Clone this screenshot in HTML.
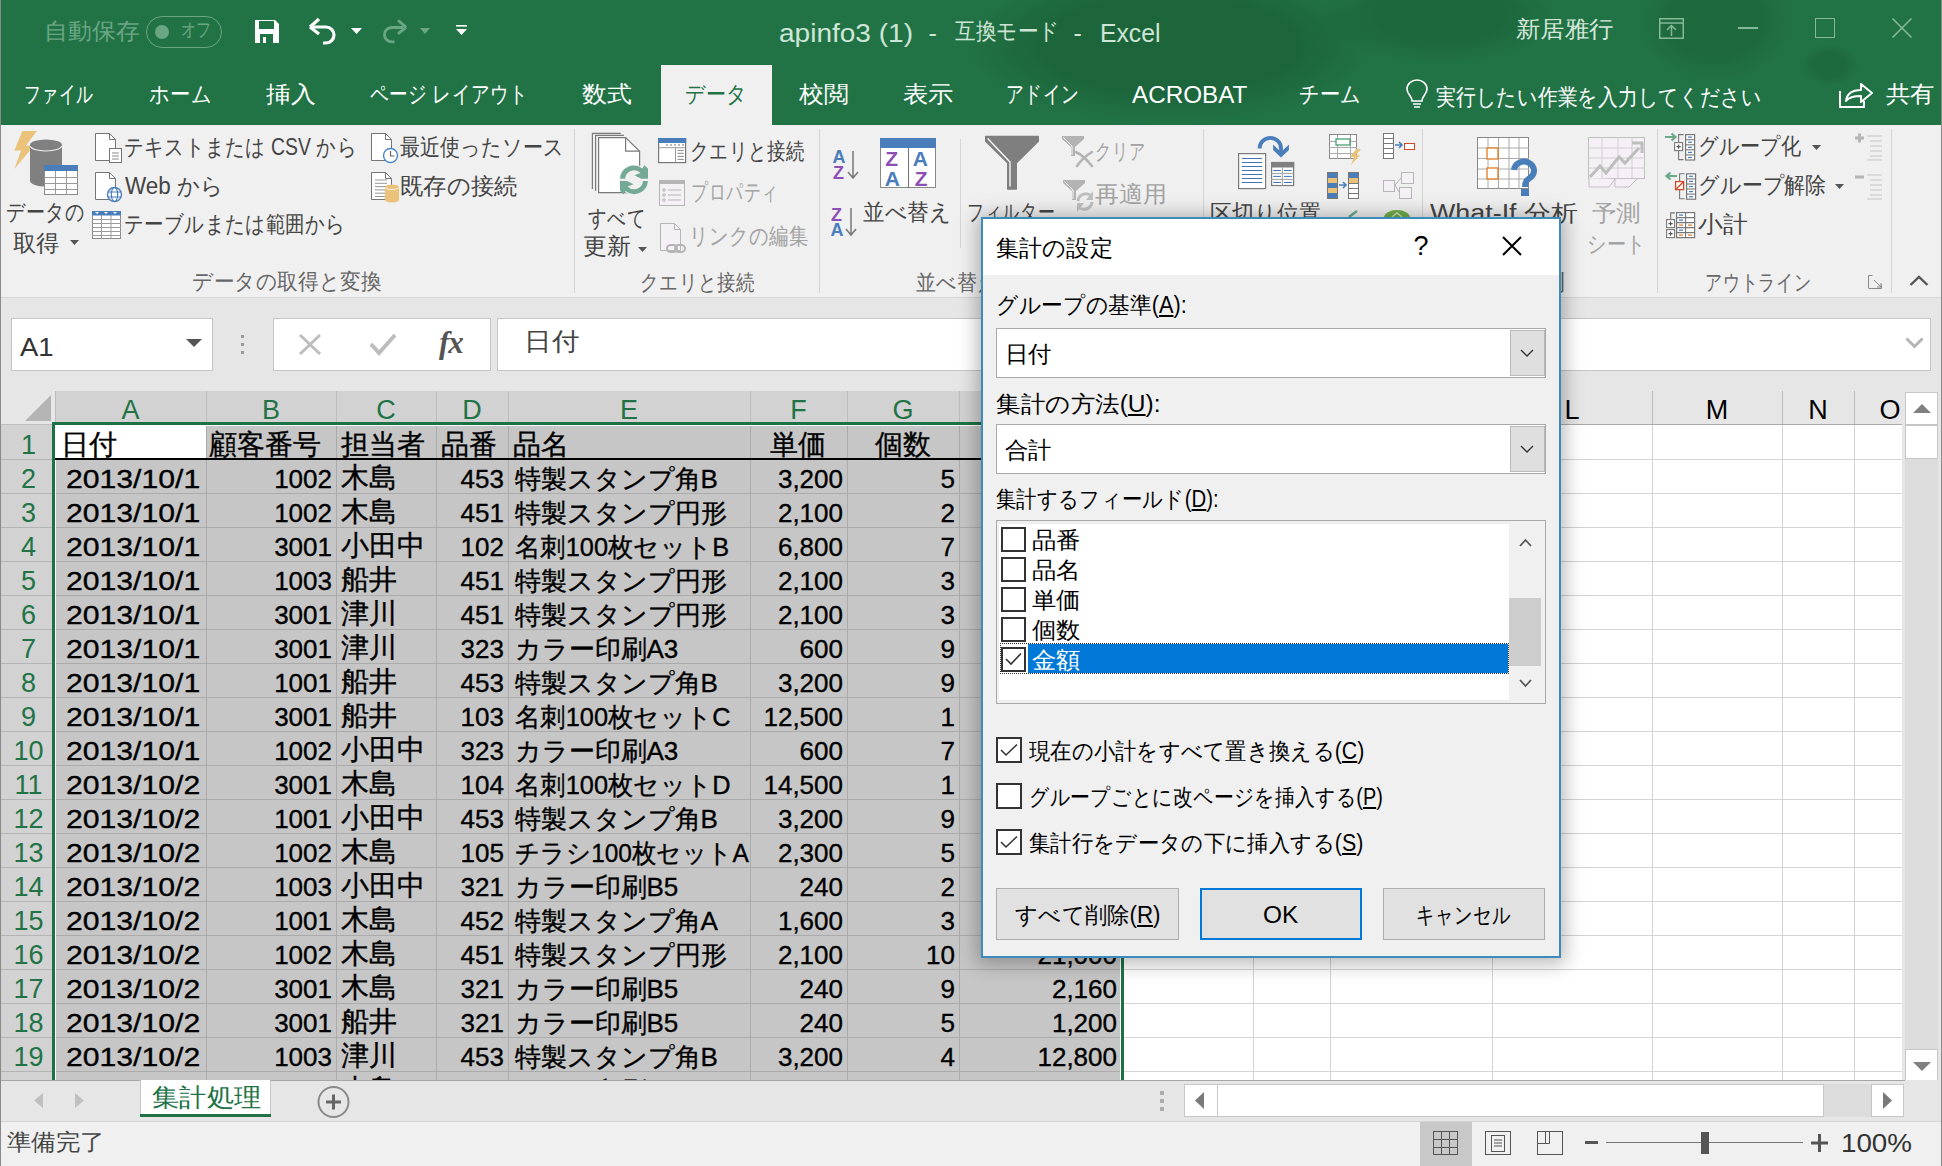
<!DOCTYPE html><html><head><meta charset="utf-8"><style>
html,body{margin:0;padding:0;}
body{width:1942px;height:1166px;position:relative;overflow:hidden;background:#f0f0f0;font-family:"Liberation Sans",sans-serif;}
.t{position:absolute;white-space:nowrap;line-height:1;transform-origin:0 0;}
.r{position:absolute;box-sizing:border-box;}
svg{position:absolute;overflow:visible;}
</style></head><body>
<div class="r" style="left:0px;top:0px;width:1942px;height:125px;background:#217346;"></div>
<div class="r" style="left:940px;top:0;width:1000px;height:125px;background:radial-gradient(ellipse 210px 80px at 230px 45px,rgba(25,90,50,.55) 60%,rgba(25,90,50,0) 100%),radial-gradient(ellipse 120px 50px at 500px 15px,rgba(25,90,50,.45) 55%,rgba(25,90,50,0) 100%),radial-gradient(ellipse 80px 65px at 775px 20px,rgba(25,90,50,.4) 55%,rgba(25,90,50,0) 100%),radial-gradient(ellipse 30px 22px at 890px 65px,rgba(25,90,50,.35) 55%,rgba(25,90,50,0) 100%);"></div>
<div id="t1" class="t" style="left:43.6px;top:19.9px;font-size:23px;color:#6aa683;transform:scaleX(1.0409);">自動保存</div>
<div class="r" style="left:146px;top:16px;width:76px;height:32px;border:1.5px solid #6aa683;border-radius:16px;"></div>
<div class="r" style="left:155px;top:25px;width:14px;height:14px;border-radius:50%;background:#6aa683;"></div>
<div id="t2" class="t" style="left:180.9px;top:20.3px;font-size:19px;color:#6aa683;transform:scaleX(0.7968);">オフ</div>
<svg style="left:254px;top:19px" width="26" height="25" viewBox="0 0 26 25"><path d="M1 1h20l4 4v19H1z" fill="#fff"/><rect x="5" y="2" width="15" height="8" fill="#217346"/><rect x="6" y="15" width="13" height="9" fill="#217346"/><rect x="9" y="18" width="3" height="6" fill="#fff"/></svg>
<svg style="left:309px;top:18px" width="30" height="27" viewBox="0 0 30 27"><path d="M4 9 H17 A8 8 0 0 1 17 25 H14" fill="none" stroke="#fff" stroke-width="3.2"/><path d="M1 9 L10 1 M1 9 L10 16" stroke="#fff" stroke-width="3.2" fill="none"/></svg>
<svg style="left:351px;top:28px" width="11" height="6"><path d="M0 0h11L5.5 6z" fill="#fff"/></svg>
<svg style="left:380px;top:18px" width="27" height="27" viewBox="0 0 30 27"><path d="M26 9 H13 A8 8 0 0 0 13 25 H16" fill="none" stroke="#6aa683" stroke-width="3.2"/><path d="M29 9 L20 1 M29 9 L20 16" stroke="#6aa683" stroke-width="3.2" fill="none"/></svg>
<svg style="left:420px;top:28px" width="10" height="6"><path d="M0 0h10L5 6z" fill="#6aa683"/></svg>
<svg style="left:456px;top:25px" width="11" height="11"><rect x="0" y="0" width="11" height="1.6" fill="#fff"/><path d="M0 4h11L5.5 10z" fill="#fff"/></svg>
<div id="t3" class="t" style="left:778.5px;top:20.6px;font-size:25px;color:#cfe5d6;transform:scaleX(1.1210);">apinfo3 (1)</div>
<div id="t4" class="t" style="left:928.5px;top:20.6px;font-size:25px;color:#cfe5d6;">-</div>
<div id="t5" class="t" style="left:954.6px;top:19.9px;font-size:23px;color:#cfe5d6;transform:scaleX(0.8954);">互換モード</div>
<div id="t6" class="t" style="left:1073.5px;top:20.6px;font-size:25px;color:#cfe5d6;">-</div>
<div id="t7" class="t" style="left:1100.1px;top:20.6px;font-size:25px;color:#cfe5d6;transform:scaleX(0.9879);">Excel</div>
<div id="t8" class="t" style="left:1515.6px;top:17.9px;font-size:23px;color:#d3e6d9;transform:scaleX(1.0626);">新居雅行</div>
<svg style="left:1659px;top:18px" width="25" height="21"><rect x="0.75" y="0.75" width="23.5" height="19.5" fill="none" stroke="#86b99a" stroke-width="1.5"/><path d="M1 5h23" stroke="#86b99a" stroke-width="1.5"/><path d="M12.5 18V8 M8 12l4.5-4.5L17 12" stroke="#86b99a" stroke-width="1.5" fill="none"/></svg>
<div class="r" style="left:1738px;top:27px;width:20px;height:2px;background:#86b99a;"></div>
<div class="r" style="left:1815px;top:18px;width:20px;height:20px;border:1.5px solid #86b99a;"></div>
<svg style="left:1892px;top:18px" width="20" height="20"><path d="M0.5 0.5L19.5 19.5M19.5 0.5L0.5 19.5" stroke="#86b99a" stroke-width="1.6"/></svg>
<div class="r" style="left:661px;top:65px;width:111px;height:60px;background:#f0f0f0;"></div>
<div id="t9" class="t" style="left:24.1px;top:82.9px;font-size:23px;color:#fff;transform:scaleX(0.7288);">ファイル</div>
<div id="t10" class="t" style="left:148.6px;top:82.9px;font-size:23px;color:#fff;transform:scaleX(0.8839);">ホーム</div>
<div id="t11" class="t" style="left:265.6px;top:82.9px;font-size:23px;color:#fff;transform:scaleX(1.0817);">挿入</div>
<div id="t12" class="t" style="left:369.6px;top:82.9px;font-size:23px;color:#fff;transform:scaleX(0.8043);">ページ レイアウト</div>
<div id="t13" class="t" style="left:581.6px;top:82.9px;font-size:23px;color:#fff;transform:scaleX(1.0817);">数式</div>
<div id="t14" class="t" style="left:684.6px;top:82.9px;font-size:23px;color:#217346;transform:scaleX(0.8699);">データ</div>
<div id="t15" class="t" style="left:798.6px;top:82.9px;font-size:23px;color:#fff;transform:scaleX(1.0817);">校閲</div>
<div id="t16" class="t" style="left:902.6px;top:82.9px;font-size:23px;color:#fff;transform:scaleX(1.1035);">表示</div>
<div id="t17" class="t" style="left:1005.6px;top:82.9px;font-size:23px;color:#fff;transform:scaleX(0.7683);">アドイン</div>
<div id="t18" class="t" style="left:1131.6px;top:84.3px;font-size:23px;color:#fff;transform:scaleX(1.0537);">ACROBAT</div>
<div id="t19" class="t" style="left:1299.2px;top:82.9px;font-size:23px;color:#fff;transform:scaleX(0.8825);">チーム</div>
<svg style="left:1405px;top:80px" width="24" height="28" viewBox="0 0 24 28"><path d="M7 21 C7 16 2 14 2 9 A10 9 0 0 1 22 9 C22 14 17 16 17 21 Z" fill="none" stroke="#fff" stroke-width="1.6"/><path d="M8 24h8M9 27h6" stroke="#fff" stroke-width="1.6"/></svg>
<div id="t20" class="t" style="left:1435.6px;top:85.9px;font-size:23px;color:#fff;transform:scaleX(0.8618);">実行したい作業を入力してください</div>
<svg style="left:1839px;top:82px" width="34" height="26" viewBox="0 0 34 26"><path d="M1 9v16h24v-6" fill="none" stroke="#fff" stroke-width="2"/><path d="M7 19 C8 11 14 8 22 8 V2 L33 11 L22 20 V14 C15 14 10 15 7 19Z" fill="none" stroke="#fff" stroke-width="2" stroke-linejoin="round"/></svg>
<div id="t21" class="t" style="left:1885.6px;top:82.9px;font-size:23px;color:#fff;transform:scaleX(1.0600);">共有</div>
<div class="r" style="left:0px;top:0px;width:1px;height:1166px;background:#8a8a8a;"></div>
<div class="r" style="left:1941px;top:0px;width:1px;height:1166px;background:#8a8a8a;"></div>
<div class="r" style="left:1px;top:125px;width:1940px;height:172px;background:#f0f0f0;"></div>
<div class="r" style="left:1px;top:297px;width:1940px;height:1px;background:#d6d6d6;"></div>
<div class="r" style="left:574px;top:129px;width:1px;height:164px;background:#d5d5d5;"></div>
<div class="r" style="left:819px;top:129px;width:1px;height:164px;background:#d5d5d5;"></div>
<div class="r" style="left:1203px;top:129px;width:1px;height:164px;background:#d5d5d5;"></div>
<div class="r" style="left:1422px;top:129px;width:1px;height:164px;background:#d5d5d5;"></div>
<div class="r" style="left:1657px;top:129px;width:1px;height:164px;background:#d5d5d5;"></div>
<div class="r" style="left:1891px;top:129px;width:1px;height:164px;background:#d5d5d5;"></div>
<div class="r" style="left:960px;top:139px;width:1px;height:109px;background:#d5d5d5;"></div>
<svg style="left:13px;top:130px" width="68" height="66" viewBox="0 0 68 66">
<path d="M9.4 1h14.4l-11 14.8h8.1L1.3 39l6.9-18.5H1.3z" fill="#ebc27a"/>
<path d="M17 15 a16 5.5 0 0 1 32 0 v36 a16 5.5 0 0 1 -32 0z" fill="#808080"/>
<path d="M17.5 16 a15.5 5 0 0 0 31 0" fill="none" stroke="#f0f0f0" stroke-width="1.2"/>
<rect x="31.5" y="35.5" width="33" height="29" fill="#fff" stroke="#8a8a8a"/>
<rect x="31" y="35" width="34" height="6" fill="#4a7ebb"/>
<path d="M42.5 41v24M53.5 41v24M31 47.5h34M31 53.5h34M31 59.5h34" stroke="#9a9a9a" stroke-width="1"/>
</svg>
<div id="t22" class="t" style="left:5.6px;top:201.4px;font-size:23px;color:#444444;transform:scaleX(0.8291);">データの</div>
<div id="t23" class="t" style="left:12.6px;top:232.4px;font-size:23px;color:#444444;transform:scaleX(1.0165);">取得</div>
<svg style="left:70px;top:240px" width="9" height="5" viewBox="0 0 9 5"><path d="M0 0h9L4.5 5z" fill="#555"/></svg>
<svg style="left:95px;top:133px" width="23" height="30" viewBox="0 0 23 30"><path d="M0.5 0.5h14l6 6v21h-20z" fill="#fff" stroke="#757575"/><path d="M14.5 0.5v6h6" fill="none" stroke="#757575"/></svg>
<svg style="left:108px;top:147px" width="15" height="17" viewBox="0 0 15 17"><rect x="1.5" y="1.5" width="12" height="14" fill="#fff" stroke="#757575"/><path d="M4 6h7M4 9h7M4 12h7" stroke="#8a8a8a"/></svg>
<div id="t24" class="t" style="left:123.6px;top:136.4px;font-size:23px;color:#444444;transform:scaleX(0.8431);">テキストまたは CSV から</div>
<svg style="left:95px;top:172px" width="23" height="30" viewBox="0 0 23 30"><path d="M0.5 0.5h14l6 6v21h-20z" fill="#fff" stroke="#757575"/><path d="M14.5 0.5v6h6" fill="none" stroke="#757575"/></svg>
<svg style="left:106px;top:186px" width="17" height="17" viewBox="0 0 17 17"><circle cx="8.5" cy="8.5" r="7" fill="#fff" stroke="#4a7ebb" stroke-width="1.4"/><ellipse cx="8.5" cy="8.5" rx="3.2" ry="7" fill="none" stroke="#4a7ebb" stroke-width="1.2"/><path d="M1.5 6h14M1.5 11h14" stroke="#4a7ebb" stroke-width="1.2"/></svg>
<div id="t25" class="t" style="left:124.6px;top:175.4px;font-size:23px;color:#444444;transform:scaleX(0.9751);">Web から</div>
<svg style="left:92px;top:211px" width="29" height="29" viewBox="0 0 29 29"><rect x="0.5" y="0.5" width="28" height="27" fill="#fff" stroke="#8a8a8a"/><rect x="0" y="0" width="29" height="4.5" fill="#4a7ebb"/><path d="M9.5 4v24M19 4v24M0 8.5h29M0 12.5h29M0 16.5h29M0 20.5h29M0 24.5h29" stroke="#9a9a9a" stroke-width="1"/><path d="M3 1h4l-2 2zM12 1h4l-2 2zM21 1h4l-2 2z" fill="#fff"/></svg>
<div id="t26" class="t" style="left:123.6px;top:213.4px;font-size:23px;color:#444444;transform:scaleX(0.8477);">テーブルまたは範囲から</div>
<svg style="left:371px;top:133px" width="23" height="30" viewBox="0 0 23 30"><path d="M0.5 0.5h14l6 6v21h-20z" fill="#fff" stroke="#757575"/><path d="M14.5 0.5v6h6" fill="none" stroke="#757575"/></svg>
<svg style="left:382px;top:147px" width="17" height="17" viewBox="0 0 17 17"><circle cx="8.5" cy="8.5" r="7" fill="#fff" stroke="#4a86c8" stroke-width="1.4"/><path d="M8.5 4v5h4" fill="none" stroke="#666" stroke-width="1.2"/></svg>
<div id="t27" class="t" style="left:400.2px;top:136.4px;font-size:23px;color:#444444;transform:scaleX(0.8732);">最近使ったソース</div>
<svg style="left:371px;top:172px" width="23" height="30" viewBox="0 0 23 30"><path d="M0.5 0.5h14l6 6v21h-20z" fill="#fff" stroke="#757575"/><path d="M14.5 0.5v6h6" fill="none" stroke="#757575"/><path d="M4 8.0h12" stroke="#8a8a8a" stroke-width="0.9"/><path d="M4 11.3h12" stroke="#8a8a8a" stroke-width="0.9"/><path d="M4 14.6h12" stroke="#8a8a8a" stroke-width="0.9"/><path d="M4 17.9h12" stroke="#8a8a8a" stroke-width="0.9"/><path d="M4 21.2h12" stroke="#8a8a8a" stroke-width="0.9"/><path d="M4 24.5h12" stroke="#8a8a8a" stroke-width="0.9"/></svg>
<svg style="left:385px;top:184px" width="14" height="19" viewBox="0 0 14 19"><path d="M0 3a7 2.5 0 0 1 14 0v13a7 2.5 0 0 1-14 0z" fill="#ebc27a"/><path d="M0.5 3.5a6.5 2 0 0 0 13 0" fill="none" stroke="#fff" stroke-width="0.8"/></svg>
<div id="t28" class="t" style="left:400.2px;top:175.4px;font-size:23px;color:#444444;transform:scaleX(1.0143);">既存の接続</div>
<div id="t29" class="t" style="left:191.7px;top:270.5px;font-size:22px;color:#666666;transform:scaleX(0.9388);">データの取得と変換</div>
<svg style="left:580px;top:128px" width="72" height="70" viewBox="0 0 72 70"><path d="M12.4 61V5.4H40.8" fill="none" stroke="#7a7a7a" stroke-width="1.2"/>
<path d="M15.6 62.7V7.4H43.9" fill="none" stroke="#7a7a7a" stroke-width="1.2"/>
<path d="M18.6 64.6V9.6H45.6L59.6 23.2V64.6Z" fill="#fff" stroke="#7a7a7a" stroke-width="1.2"/>
<path d="M45.6 9.6V23.2H59.6" fill="none" stroke="#7a7a7a" stroke-width="1.2"/>
<circle cx="54" cy="51.8" r="15" fill="#f0f0f0"/><g fill="#73a995"><path d="M40.1 50.7A13.9 13.9 0 0 1 62.5 40.5L64.3 37.1L68 40.8V50.7H61.2L54.4 47.3L60.4 45.1A9 9 0 0 0 45 50.7Z"/>
<path d="M40.1 50.7A13.9 13.9 0 0 1 62.5 40.5L64.3 37.1L68 40.8V50.7H61.2L54.4 47.3L60.4 45.1A9 9 0 0 0 45 50.7Z" transform="rotate(180 54 51.8)"/></g></svg>
<div id="t30" class="t" style="left:587.6px;top:206.9px;font-size:23px;color:#444444;transform:scaleX(0.8022);">すべて</div>
<div id="t31" class="t" style="left:582.6px;top:235.4px;font-size:23px;color:#444444;transform:scaleX(1.0383);">更新</div>
<svg style="left:638px;top:247px" width="9" height="5" viewBox="0 0 9 5"><path d="M0 0h9L4.5 5z" fill="#555"/></svg>
<svg style="left:658px;top:138px" width="29" height="26" viewBox="0 0 29 26"><rect x="0.6" y="0.6" width="27" height="24" fill="#fff" stroke="#777" stroke-width="1.2"/><rect x="0" y="0" width="28.2" height="5" fill="#4a7ebb"/><path d="M8.2 7h1.6M12.2 7h1.6M16.2 7h1.6M20.2 7h1.6M24.2 7h1.6" stroke="#8a8a8a" stroke-width="1.6"/><path d="M0.5 9.7h27M17.5 9.7v15" stroke="#999"/><path d="M19.5 12.4h6.3M19.5 15.3h6.3M19.5 18.4h6.3M19.5 21.4h6.3" stroke="#888"/></svg>
<div id="t32" class="t" style="left:689.6px;top:140.4px;font-size:23px;color:#444444;transform:scaleX(0.8046);">クエリと接続</div>
<svg style="left:659px;top:180px" width="27" height="27" viewBox="0 0 27 27"><rect x="0.5" y="0.5" width="25" height="25" fill="#f5f0f5" stroke="#b5b5b5"/><rect x="0" y="0" width="26" height="4" fill="#b5b5b5"/><path d="M9 10h13M9 15h13M9 20h13" stroke="#b5b5b5"/><circle cx="5" cy="10" r="1.3" fill="none" stroke="#b5b5b5"/><circle cx="5" cy="15" r="1.3" fill="none" stroke="#b5b5b5"/><circle cx="5" cy="20" r="1.3" fill="none" stroke="#b5b5b5"/></svg>
<div id="t33" class="t" style="left:690.6px;top:181.4px;font-size:23px;color:#a3a3a3;transform:scaleX(0.7313);">プロパティ</div>
<svg style="left:660px;top:223px" width="29" height="32" viewBox="0 0 29 32"><path d="M0.5 0.5h14l6 6v21h-20z" fill="#f5f0f5" stroke="#b5b5b5"/><path d="M14.5 0.5v6h6" fill="none" stroke="#b5b5b5"/><rect x="7" y="22" width="10" height="7" rx="3.5" fill="none" stroke="#b5b5b5" stroke-width="2"/><rect x="15" y="22" width="10" height="7" rx="3.5" fill="none" stroke="#b5b5b5" stroke-width="2"/></svg>
<div id="t34" class="t" style="left:689.3px;top:225.4px;font-size:23px;color:#a3a3a3;transform:scaleX(0.8385);">リンクの編集</div>
<div id="t35" class="t" style="left:639.7px;top:271.5px;font-size:22px;color:#666666;transform:scaleX(0.8407);">クエリと接続</div>
<div id="t36" class="t" style="left:832.4px;top:148.4px;font-size:18px;color:#4a7ebb;font-weight:bold">A</div>
<div id="t37" class="t" style="left:832.9px;top:164.4px;font-size:18px;color:#8e4fb5;font-weight:bold">Z</div>
<svg style="left:847px;top:151px" width="12" height="30" viewBox="0 0 12 30"><path d="M6 0v27M1 21l5 6 5-6" fill="none" stroke="#777" stroke-width="1.5"/></svg>
<div id="t38" class="t" style="left:830.9px;top:205.9px;font-size:18px;color:#8e4fb5;font-weight:bold">Z</div>
<div id="t39" class="t" style="left:830.4px;top:220.9px;font-size:18px;color:#4a7ebb;font-weight:bold">A</div>
<svg style="left:845px;top:208px" width="12" height="30" viewBox="0 0 12 30"><path d="M6 0v27M1 21l5 6 5-6" fill="none" stroke="#777" stroke-width="1.5"/></svg>
<svg style="left:880px;top:138px" width="56" height="50" viewBox="0 0 56 50"><rect x="0.5" y="0.5" width="55" height="49" fill="#fff" stroke="#888"/><rect x="0" y="0" width="56" height="10" fill="#4a7ebb"/><path d="M28.5 10v40" stroke="#777" stroke-width="1.1"/></svg>
<div id="t40" class="t" style="left:885.2px;top:147.5px;font-size:21px;color:#8e4fb5;font-weight:bold">Z</div>
<div id="t41" class="t" style="left:884.7px;top:167.5px;font-size:21px;color:#4a7ebb;font-weight:bold">A</div>
<div id="t42" class="t" style="left:912.7px;top:147.5px;font-size:21px;color:#4a7ebb;font-weight:bold">A</div>
<div id="t43" class="t" style="left:914.7px;top:167.5px;font-size:21px;color:#8e4fb5;font-weight:bold">Z</div>
<div id="t44" class="t" style="left:863.1px;top:201.4px;font-size:23px;color:#444444;transform:scaleX(0.9368);">並べ替え</div>
<div id="t45" class="t" style="left:916.3px;top:271.5px;font-size:22px;color:#666666;transform:scaleX(0.9033);">並べ替えとフィルター</div>
<svg style="left:984px;top:135px" width="57" height="57" viewBox="0 0 57 57"><path d="M1 0.7H55V6.5L33 28.2V54.7H23V28.2L1 6.5Z" fill="#7f7f7f"/><path d="M3.7 3.5L26 27V51.5" fill="none" stroke="#fff" stroke-width="1.3"/></svg>
<div id="t46" class="t" style="left:966.6px;top:201.4px;font-size:23px;color:#444444;transform:scaleX(0.7375);">フィルター</div>
<svg style="left:1061px;top:135px" width="34" height="34" viewBox="0 0 34 34"><path d="M1 1H23V4L14 12V21H10V12L1 4Z" fill="#b3b3b3"/><path d="M2.5 2.5L11 11V20" fill="none" stroke="#fff" stroke-width="0.9"/><path d="M15 17C21 20 27 26 31 31M16 31C20 25 26 20 31 17" fill="none" stroke="#b3b3b3" stroke-width="2.6" stroke-linecap="round"/></svg>
<div id="t47" class="t" style="left:1094.7px;top:141.0px;font-size:22px;color:#a3a3a3;transform:scaleX(0.7339);">クリア</div>
<svg style="left:1062px;top:179px" width="34" height="34" viewBox="0 0 34 34"><path d="M1 1H23V4L14 12V21H10V12L1 4Z" fill="#b3b3b3"/><path d="M2.5 2.5L11 11V20" fill="none" stroke="#fff" stroke-width="0.9"/><path d="M16 22A8 8 0 0 1 29.5 17" fill="none" stroke="#c0c0c0" stroke-width="3"/><path d="M31 12V21H24Z" fill="#c0c0c0"/><path d="M30 23A8 8 0 0 1 16.5 28" fill="none" stroke="#c0c0c0" stroke-width="3"/><path d="M15 33V24H22Z" fill="#c0c0c0"/></svg>
<div id="t48" class="t" style="left:1095.4px;top:183.4px;font-size:23px;color:#a3a3a3;transform:scaleX(1.0400);">再適用</div>
<svg style="left:1230px;top:128px" width="70" height="67" viewBox="0 0 70 67"><path d="M29.6 20.5A10.7 10.7 0 0 1 51 20.5V25" fill="none" stroke="#4a7ebb" stroke-width="3.8"/>
<path d="M43.1 16.4L51 24L58.9 16.4V22L51 29.5L43.1 22Z" fill="#4a7ebb"/>
<rect x="8.6" y="25.6" width="27" height="35" fill="#fff" stroke="#7a7a7a" stroke-width="1.2"/>
<path d="M12 30.5h20M12 34.5h20M12 38.5h20M12 42.5h20M12 46.5h20M12 50.5h20M12 54.5h20" stroke="#3f74b8" stroke-width="1"/>
<rect x="41.6" y="34.5" width="22" height="23" fill="#fff" stroke="#7a7a7a" stroke-width="1.2"/><rect x="41" y="34" width="23.2" height="5.5" fill="#808080"/>
<path d="M52.4 39.5v18M41 45.4h23M41 51.4h23" stroke="#a0a0a0"/>
<path d="M43.2 42.5h7.7M54 42.5h7.8M43.2 48.4h7.7M54 48.4h7.8M43.2 54.5h7.7M54 54.5h7.8" stroke="#3f74b8" stroke-width="1"/></svg>
<div id="t49" class="t" style="left:1209.6px;top:202.4px;font-size:23px;color:#444444;transform:scaleX(0.9591);">区切り位置</div>
<svg style="left:1328px;top:133px" width="33" height="33" viewBox="0 0 33 33"><rect x="1.5" y="1.5" width="27" height="24" fill="#fff" stroke="#888"/><path d="M9.5 2v24M22.5 2v24M1 8.5h28M1 14.5h28M1 20.5h28" stroke="#aaa"/><rect x="8" y="6" width="14" height="6" fill="#fff" stroke="#3a9a6a" stroke-width="1.2"/><path d="M28 16h5l-5 6h4l-9 10 3-8h-4z" fill="#ebc27a"/></svg>
<svg style="left:1326px;top:172px" width="35" height="28" viewBox="0 0 35 28"><rect x="1.5" y="0.5" width="10" height="26" fill="#4a7ebb" stroke="#777"/><rect x="2" y="6" width="9" height="5" fill="#ebc27a"/><rect x="2" y="16" width="9" height="5" fill="#ebc27a"/><rect x="22.5" y="0.5" width="10" height="26" fill="#fff" stroke="#777"/><rect x="23" y="1" width="9" height="5" fill="#4a7ebb"/><rect x="23" y="6" width="9" height="5" fill="#ebc27a"/><path d="M22 11.5h11M22 16.5h11M22 21.5h11" stroke="#777"/><path d="M13 13h7M17 10l3 3-3 3" fill="none" stroke="#4a7ebb" stroke-width="1.6"/></svg>
<svg style="left:1382px;top:133px" width="34" height="28" viewBox="0 0 34 28"><rect x="1.5" y="0.5" width="10" height="25" fill="#fff" stroke="#777"/><path d="M1 5.5h11M1 10.5h11M1 15.5h11M1 20.5h11" stroke="#777"/><path d="M13 12h7M17 9l3 3-3 3" fill="none" stroke="#4a7ebb" stroke-width="1.6"/><rect x="22.5" y="10.5" width="10" height="6" fill="#fff" stroke="#d24726"/></svg>
<svg style="left:1383px;top:172px" width="33" height="28" viewBox="0 0 33 28"><rect x="0.5" y="8.5" width="11" height="11" fill="#f5f0f5" stroke="#b5b5b5"/><rect x="18.5" y="0.5" width="12" height="11" fill="#f5f0f5" stroke="#b5b5b5"/><rect x="16.5" y="15.5" width="12" height="11" fill="#f5f0f5" stroke="#b5b5b5"/><path d="M12 13l6-7M12 13l4 7" stroke="#b5b5b5"/></svg>
<svg style="left:1476px;top:136px" width="62" height="60" viewBox="0 0 62 60"><rect x="1.5" y="1.5" width="51" height="51" fill="#fff" stroke="#888"/>
<path d="M12 2v51M22.5 2v51M33 2v51M43 2v51M2 12h51M2 22.5h51M2 33h51M2 43h51" stroke="#aaa"/>
<rect x="11" y="12" width="11" height="11" fill="#fff" stroke="#e07b24" stroke-width="1.3"/><rect x="11" y="32" width="11" height="11" fill="#fff" stroke="#e07b24" stroke-width="1.3"/>
<path d="M38 34a10 9 0 1 1 17 7c-4 3-6 4-6 10" fill="none" stroke="#4a7ebb" stroke-width="6"/><rect x="45" y="53" width="8" height="7" fill="#4a7ebb"/></svg>
<div id="t50" class="t" style="left:1429.6px;top:201.8px;font-size:23px;color:#444444;transform:scaleX(1.1679);">What-If 分析</div>
<svg style="left:1588px;top:137px" width="58" height="52" viewBox="0 0 58 52"><rect x="0.5" y="0.5" width="56" height="41" fill="#f5f0f5" stroke="#c0c0c0"/><path d="M14 1v40M30 1v40M44 1v40M1 11h56M1 21h56M1 31h56" stroke="#d0d0d0"/><path d="M1 41v9h20l6-8M27 42v8h14l8-8" fill="#f5f0f5" stroke="#c0c0c0"/><path d="M2 40l10-11 6 7 13-16 6 6 14-15" fill="none" stroke="#bdbdbd" stroke-width="3"/><path d="M44 6h10v10" fill="none" stroke="#bdbdbd" stroke-width="3"/></svg>
<div id="t51" class="t" style="left:1591.6px;top:202.4px;font-size:23px;color:#a3a3a3;transform:scaleX(1.0600);">予測</div>
<div id="t52" class="t" style="left:1586.6px;top:233.4px;font-size:23px;color:#a3a3a3;transform:scaleX(0.8346);">シート</div>
<div id="t53" class="t" style="left:1516.7px;top:271.5px;font-size:22px;color:#666666;transform:scaleX(1.0827);">予測</div>
<svg style="left:1655px;top:128px" width="45" height="36" viewBox="0 0 45 36"><path d="M10 9h10M16.5 5.5L20.5 9l-4 3.5" fill="none" stroke="#6aa88a" stroke-width="2.2"/><path d="M28.6 6.6h-5v25h5" fill="none" stroke="#777" stroke-width="1.1"/><rect x="19.6" y="14.6" width="8" height="8" fill="#fff" stroke="#777" stroke-width="1.1"/><path d="M21.5 18.6h4.2M23.6 16.5v4.2" stroke="#555" stroke-width="1.1"/><rect x="30.6" y="6.6" width="9" height="25.4" fill="#fff" stroke="#777" stroke-width="1.2"/><path d="M30 11.7h10" stroke="#777" stroke-width="1.1"/><path d="M30 16.8h10" stroke="#777" stroke-width="1.1"/><path d="M30 21.8h10" stroke="#777" stroke-width="1.1"/><path d="M30 26.9h10" stroke="#777" stroke-width="1.1"/><path d="M33 9.1h4" stroke="#4a7ebb" stroke-width="1.2"/><path d="M33 14.2h4" stroke="#4a7ebb" stroke-width="1.2"/><path d="M33 19.3h4" stroke="#4a7ebb" stroke-width="1.2"/><path d="M33 24.4h4" stroke="#4a7ebb" stroke-width="1.2"/><path d="M33 29.5h4" stroke="#4a7ebb" stroke-width="1.2"/></svg>
<div id="t54" class="t" style="left:1698.2px;top:135.4px;font-size:23px;color:#444444;transform:scaleX(0.8742);">グループ化</div>
<svg style="left:1812px;top:145px" width="9" height="5" viewBox="0 0 9 5"><path d="M0 0h9L4.5 5z" fill="#555"/></svg>
<svg style="left:1655px;top:128px" width="45" height="75" viewBox="0 0 45 75"><path d="M22 48H12M15.5 44.5L11.5 48l4 3.5" fill="none" stroke="#6aa88a" stroke-width="2.2"/><path d="M29.6 45.8h-5v25h5" fill="none" stroke="#777" stroke-width="1.1"/><rect x="20.6" y="53.6" width="8" height="8" fill="#fff" stroke="#d24726" stroke-width="1.3"/><path d="M21 61.3l7.3-7.3" stroke="#d24726" stroke-width="1.3"/><rect x="31.6" y="45.800000000000004" width="9" height="25.4" fill="#fff" stroke="#777" stroke-width="1.2"/><path d="M31 50.9h10" stroke="#777" stroke-width="1.1"/><path d="M31 56.0h10" stroke="#777" stroke-width="1.1"/><path d="M31 61.0h10" stroke="#777" stroke-width="1.1"/><path d="M31 66.1h10" stroke="#777" stroke-width="1.1"/><path d="M34 48.3h4" stroke="#4a7ebb" stroke-width="1.2"/><path d="M34 53.4h4" stroke="#4a7ebb" stroke-width="1.2"/><path d="M34 58.5h4" stroke="#4a7ebb" stroke-width="1.2"/><path d="M34 63.6h4" stroke="#4a7ebb" stroke-width="1.2"/><path d="M34 68.7h4" stroke="#4a7ebb" stroke-width="1.2"/></svg>
<div id="t55" class="t" style="left:1698.2px;top:174.4px;font-size:23px;color:#444444;transform:scaleX(0.9089);">グループ解除</div>
<svg style="left:1835px;top:184px" width="9" height="5" viewBox="0 0 9 5"><path d="M0 0h9L4.5 5z" fill="#555"/></svg>
<svg style="left:1655px;top:128px" width="45" height="112" viewBox="0 0 45 112"><path d="M20 84.9h-4.3v6.3" fill="none" stroke="#777" stroke-width="1.1"/><rect x="11.6" y="91.6" width="8" height="8" fill="#fff" stroke="#777" stroke-width="1.1"/><path d="M13.5 95.6h4.2M15.6 93.5v4.2" stroke="#555" stroke-width="1.1"/><rect x="11.6" y="101.6" width="8" height="8" fill="#fff" stroke="#777" stroke-width="1.1"/><path d="M13.5 105.6h4.2M15.6 103.5v4.2" stroke="#555" stroke-width="1.1"/><rect x="21.6" y="84.6" width="18" height="25" fill="#fff" stroke="#777" stroke-width="1.2"/><path d="M30.6 84.6v25M21 89.6h19M21 94.6h19M21 99.6h19M21 104.6h19" stroke="#777" stroke-width="1.1"/><path d="M24 87.1h4M24 92.1h4M24 102.1h4" stroke="#4a7ebb" stroke-width="1.2"/><path d="M24 97.1h4M33 97.1h4M24 107.1h4M33 107.1h4" stroke="#e07b24" stroke-width="1.2"/></svg>
<div id="t56" class="t" style="left:1698.2px;top:213.4px;font-size:23px;color:#444444;transform:scaleX(1.0817);">小計</div>
<svg style="left:1853px;top:133px" width="30" height="28" viewBox="0 0 30 28"><path d="M2 5h9M6.5 0.5v9" stroke="#b5b5b5" stroke-width="3"/><path d="M14 3h15M17 8h12M17 13h12M17 18h12M17 23h12M14 27h15" stroke="#c5c5c5"/></svg>
<svg style="left:1853px;top:172px" width="30" height="28" viewBox="0 0 30 28"><path d="M2 5h9" stroke="#b5b5b5" stroke-width="3"/><path d="M14 3h15M17 8h12M17 13h12M17 18h12M17 23h12M14 27h15" stroke="#c5c5c5"/></svg>
<div id="t57" class="t" style="left:1704.7px;top:271.5px;font-size:22px;color:#666666;transform:scaleX(0.7728);">アウトライン</div>
<svg style="left:1868px;top:275px" width="15" height="14" viewBox="0 0 15 14"><path d="M0.5 13V0.5h4M0.5 13.5h13v-4" fill="none" stroke="#888"/><path d="M6 5l7 7M13 8v4h-4" fill="none" stroke="#888"/></svg>
<svg style="left:1909px;top:275px" width="20" height="11" viewBox="0 0 20 11"><path d="M1.5 10l8.5-8 8.5 8" fill="none" stroke="#555" stroke-width="2.4"/></svg>
<svg style="left:1384px;top:209px" width="28" height="10" viewBox="0 0 28 10"><ellipse cx="13" cy="9" rx="13" ry="8" fill="#70ad47"/><path d="M8 8l5-4 5 4" fill="none" stroke="#cfe8c0" stroke-width="1.4"/></svg>
<svg style="left:1348px;top:210px" width="10" height="8" viewBox="0 0 10 8"><path d="M1 7L9 1" stroke="#6aab8e" stroke-width="2.5"/></svg>
<div class="r" style="left:1px;top:298px;width:1940px;height:94px;background:#e6e6e6;"></div>
<div class="r" style="left:11px;top:318px;width:202px;height:53px;background:#fff;border:1px solid #c6c6c6;"></div>
<div id="t58" class="t" style="left:19.5px;top:335.1px;font-size:25px;color:#333;transform:scaleX(1.0950);">A1</div>
<svg style="left:186px;top:339px" width="16" height="8" viewBox="0 0 16 8"><path d="M0 0h16L8 8z" fill="#555"/></svg>
<div class="r" style="left:241px;top:335px;width:3px;height:3px;background:#9a9a9a;"></div>
<div class="r" style="left:241px;top:343px;width:3px;height:3px;background:#9a9a9a;"></div>
<div class="r" style="left:241px;top:351px;width:3px;height:3px;background:#9a9a9a;"></div>
<div class="r" style="left:273px;top:318px;width:218px;height:53px;background:#fff;border:1px solid #c6c6c6;"></div>
<svg style="left:298px;top:334px" width="25" height="21" viewBox="0 0 25 21"><path d="M2 1l20 19M22 1L2 20" stroke="#bdbdbd" stroke-width="3"/></svg>
<svg style="left:369px;top:333px" width="28" height="22" viewBox="0 0 28 22"><path d="M2 11l8 9L26 2" fill="none" stroke="#bdbdbd" stroke-width="4"/></svg>
<div class="t" style="left:439px;top:327px;font-size:31px;color:#555;font-family:'Liberation Serif',serif;font-style:italic;font-weight:bold;letter-spacing:-1px">fx</div>
<div class="r" style="left:497px;top:318px;width:1434px;height:53px;background:#fff;border:1px solid #c6c6c6;"></div>
<div id="t59" class="t" style="left:523.5px;top:329.2px;font-size:25px;color:#444;transform:scaleX(1.1000);">日付</div>
<svg style="left:1905px;top:337px" width="19" height="12" viewBox="0 0 19 12"><path d="M1.5 1.5l8 8 8-8" fill="none" stroke="#b5b5b5" stroke-width="3"/></svg>
<div class="r" style="left:1px;top:391px;width:1904px;height:690px;background:#fff;"></div>
<div class="r" style="left:1px;top:391px;width:54px;height:34px;background:#e6e6e6;"></div>
<svg style="left:25px;top:395px" width="27" height="26" viewBox="0 0 27 26"><path d="M26 0v26H0z" fill="#b4b4b4"/></svg>
<div class="r" style="left:1px;top:424px;width:51px;height:1px;background:#bdbdbd;"></div>
<div class="r" style="left:55px;top:391px;width:151px;height:34px;background:#d2d2d2;"></div>
<div class="r" style="left:55px;top:391px;width:1px;height:33px;background:#bdbdbd;"></div>
<div class="t" style="left:90.5px;top:396.5px;width:80px;text-align:center;font-size:27px;color:#217346">A</div>
<div class="r" style="left:206px;top:391px;width:130px;height:34px;background:#d2d2d2;"></div>
<div class="r" style="left:206px;top:391px;width:1px;height:33px;background:#bdbdbd;"></div>
<div class="t" style="left:231.0px;top:396.5px;width:80px;text-align:center;font-size:27px;color:#217346">B</div>
<div class="r" style="left:336px;top:391px;width:100px;height:34px;background:#d2d2d2;"></div>
<div class="r" style="left:336px;top:391px;width:1px;height:33px;background:#bdbdbd;"></div>
<div class="t" style="left:346.0px;top:396.5px;width:80px;text-align:center;font-size:27px;color:#217346">C</div>
<div class="r" style="left:436px;top:391px;width:72px;height:34px;background:#d2d2d2;"></div>
<div class="r" style="left:436px;top:391px;width:1px;height:33px;background:#bdbdbd;"></div>
<div class="t" style="left:432.0px;top:396.5px;width:80px;text-align:center;font-size:27px;color:#217346">D</div>
<div class="r" style="left:508px;top:391px;width:242px;height:34px;background:#d2d2d2;"></div>
<div class="r" style="left:508px;top:391px;width:1px;height:33px;background:#bdbdbd;"></div>
<div class="t" style="left:589.0px;top:396.5px;width:80px;text-align:center;font-size:27px;color:#217346">E</div>
<div class="r" style="left:750px;top:391px;width:97px;height:34px;background:#d2d2d2;"></div>
<div class="r" style="left:750px;top:391px;width:1px;height:33px;background:#bdbdbd;"></div>
<div class="t" style="left:758.5px;top:396.5px;width:80px;text-align:center;font-size:27px;color:#217346">F</div>
<div class="r" style="left:847px;top:391px;width:112px;height:34px;background:#d2d2d2;"></div>
<div class="r" style="left:847px;top:391px;width:1px;height:33px;background:#bdbdbd;"></div>
<div class="t" style="left:863.0px;top:396.5px;width:80px;text-align:center;font-size:27px;color:#217346">G</div>
<div class="r" style="left:959px;top:391px;width:161px;height:34px;background:#d2d2d2;"></div>
<div class="r" style="left:959px;top:391px;width:1px;height:33px;background:#bdbdbd;"></div>
<div class="t" style="left:999.5px;top:396.5px;width:80px;text-align:center;font-size:27px;color:#217346">H</div>
<div class="r" style="left:1120px;top:391px;width:133px;height:34px;background:#e6e6e6;"></div>
<div class="r" style="left:1120px;top:391px;width:1px;height:33px;background:#bdbdbd;"></div>
<div class="t" style="left:1146.5px;top:396.5px;width:80px;text-align:center;font-size:27px;color:#000">I</div>
<div class="r" style="left:1253px;top:391px;width:77px;height:34px;background:#e6e6e6;"></div>
<div class="r" style="left:1253px;top:391px;width:1px;height:33px;background:#bdbdbd;"></div>
<div class="t" style="left:1251.5px;top:396.5px;width:80px;text-align:center;font-size:27px;color:#000">J</div>
<div class="r" style="left:1330px;top:391px;width:162px;height:34px;background:#e6e6e6;"></div>
<div class="r" style="left:1330px;top:391px;width:1px;height:33px;background:#bdbdbd;"></div>
<div class="t" style="left:1371.0px;top:396.5px;width:80px;text-align:center;font-size:27px;color:#000">K</div>
<div class="r" style="left:1492px;top:391px;width:160px;height:34px;background:#e6e6e6;"></div>
<div class="r" style="left:1492px;top:391px;width:1px;height:33px;background:#bdbdbd;"></div>
<div class="t" style="left:1532.0px;top:396.5px;width:80px;text-align:center;font-size:27px;color:#000">L</div>
<div class="r" style="left:1652px;top:391px;width:130px;height:34px;background:#e6e6e6;"></div>
<div class="r" style="left:1652px;top:391px;width:1px;height:33px;background:#bdbdbd;"></div>
<div class="t" style="left:1677.0px;top:396.5px;width:80px;text-align:center;font-size:27px;color:#000">M</div>
<div class="r" style="left:1782px;top:391px;width:72px;height:34px;background:#e6e6e6;"></div>
<div class="r" style="left:1782px;top:391px;width:1px;height:33px;background:#bdbdbd;"></div>
<div class="t" style="left:1778.0px;top:396.5px;width:80px;text-align:center;font-size:27px;color:#000">N</div>
<div class="r" style="left:1854px;top:391px;width:48px;height:34px;background:#e6e6e6;"></div>
<div class="r" style="left:1854px;top:391px;width:1px;height:33px;background:#bdbdbd;"></div>
<div class="t" style="left:1850.0px;top:396.5px;width:80px;text-align:center;font-size:27px;color:#000">O</div>
<div class="r" style="left:1120px;top:424px;width:782px;height:1px;background:#ababab;"></div>
<div class="r" style="left:1px;top:425px;width:51px;height:655px;background:#d2d2d2;"></div>
<div class="r" style="left:1px;top:459px;width:51px;height:1px;background:#b4b4b4;"></div>
<div class="t" style="left:2.5px;top:432px;width:52px;text-align:center;font-size:27px;color:#217346">1</div>
<div class="r" style="left:1px;top:493px;width:51px;height:1px;background:#b4b4b4;"></div>
<div class="t" style="left:2.5px;top:466px;width:52px;text-align:center;font-size:27px;color:#217346">2</div>
<div class="r" style="left:1px;top:527px;width:51px;height:1px;background:#b4b4b4;"></div>
<div class="t" style="left:2.5px;top:500px;width:52px;text-align:center;font-size:27px;color:#217346">3</div>
<div class="r" style="left:1px;top:561px;width:51px;height:1px;background:#b4b4b4;"></div>
<div class="t" style="left:2.5px;top:534px;width:52px;text-align:center;font-size:27px;color:#217346">4</div>
<div class="r" style="left:1px;top:595px;width:51px;height:1px;background:#b4b4b4;"></div>
<div class="t" style="left:2.5px;top:568px;width:52px;text-align:center;font-size:27px;color:#217346">5</div>
<div class="r" style="left:1px;top:629px;width:51px;height:1px;background:#b4b4b4;"></div>
<div class="t" style="left:2.5px;top:602px;width:52px;text-align:center;font-size:27px;color:#217346">6</div>
<div class="r" style="left:1px;top:663px;width:51px;height:1px;background:#b4b4b4;"></div>
<div class="t" style="left:2.5px;top:636px;width:52px;text-align:center;font-size:27px;color:#217346">7</div>
<div class="r" style="left:1px;top:697px;width:51px;height:1px;background:#b4b4b4;"></div>
<div class="t" style="left:2.5px;top:670px;width:52px;text-align:center;font-size:27px;color:#217346">8</div>
<div class="r" style="left:1px;top:731px;width:51px;height:1px;background:#b4b4b4;"></div>
<div class="t" style="left:2.5px;top:704px;width:52px;text-align:center;font-size:27px;color:#217346">9</div>
<div class="r" style="left:1px;top:765px;width:51px;height:1px;background:#b4b4b4;"></div>
<div class="t" style="left:2.5px;top:738px;width:52px;text-align:center;font-size:27px;color:#217346">10</div>
<div class="r" style="left:1px;top:799px;width:51px;height:1px;background:#b4b4b4;"></div>
<div class="t" style="left:2.5px;top:772px;width:52px;text-align:center;font-size:27px;color:#217346">11</div>
<div class="r" style="left:1px;top:833px;width:51px;height:1px;background:#b4b4b4;"></div>
<div class="t" style="left:2.5px;top:806px;width:52px;text-align:center;font-size:27px;color:#217346">12</div>
<div class="r" style="left:1px;top:867px;width:51px;height:1px;background:#b4b4b4;"></div>
<div class="t" style="left:2.5px;top:840px;width:52px;text-align:center;font-size:27px;color:#217346">13</div>
<div class="r" style="left:1px;top:901px;width:51px;height:1px;background:#b4b4b4;"></div>
<div class="t" style="left:2.5px;top:874px;width:52px;text-align:center;font-size:27px;color:#217346">14</div>
<div class="r" style="left:1px;top:935px;width:51px;height:1px;background:#b4b4b4;"></div>
<div class="t" style="left:2.5px;top:908px;width:52px;text-align:center;font-size:27px;color:#217346">15</div>
<div class="r" style="left:1px;top:969px;width:51px;height:1px;background:#b4b4b4;"></div>
<div class="t" style="left:2.5px;top:942px;width:52px;text-align:center;font-size:27px;color:#217346">16</div>
<div class="r" style="left:1px;top:1003px;width:51px;height:1px;background:#b4b4b4;"></div>
<div class="t" style="left:2.5px;top:976px;width:52px;text-align:center;font-size:27px;color:#217346">17</div>
<div class="r" style="left:1px;top:1037px;width:51px;height:1px;background:#b4b4b4;"></div>
<div class="t" style="left:2.5px;top:1010px;width:52px;text-align:center;font-size:27px;color:#217346">18</div>
<div class="r" style="left:1px;top:1071px;width:51px;height:1px;background:#b4b4b4;"></div>
<div class="t" style="left:2.5px;top:1044px;width:52px;text-align:center;font-size:27px;color:#217346">19</div>
<div class="r" style="left:1px;top:1105px;width:51px;height:1px;background:#b4b4b4;"></div>
<div class="t" style="left:2.5px;top:1078px;width:52px;text-align:center;font-size:27px;color:#217346">20</div>
<div class="r" style="left:55px;top:425px;width:1065px;height:655px;background:#c6c6c6;"></div>
<div class="r" style="left:55px;top:425px;width:151px;height:34px;background:#fff;"></div>
<div class="r" style="left:206px;top:425px;width:1px;height:655px;background:#ababab;"></div>
<div class="r" style="left:336px;top:425px;width:1px;height:655px;background:#ababab;"></div>
<div class="r" style="left:436px;top:425px;width:1px;height:655px;background:#ababab;"></div>
<div class="r" style="left:508px;top:425px;width:1px;height:655px;background:#ababab;"></div>
<div class="r" style="left:750px;top:425px;width:1px;height:655px;background:#ababab;"></div>
<div class="r" style="left:847px;top:425px;width:1px;height:655px;background:#ababab;"></div>
<div class="r" style="left:959px;top:425px;width:1px;height:655px;background:#ababab;"></div>
<div class="r" style="left:1253px;top:425px;width:1px;height:655px;background:#d4d4d4;"></div>
<div class="r" style="left:1330px;top:425px;width:1px;height:655px;background:#d4d4d4;"></div>
<div class="r" style="left:1492px;top:425px;width:1px;height:655px;background:#d4d4d4;"></div>
<div class="r" style="left:1652px;top:425px;width:1px;height:655px;background:#d4d4d4;"></div>
<div class="r" style="left:1782px;top:425px;width:1px;height:655px;background:#d4d4d4;"></div>
<div class="r" style="left:1854px;top:425px;width:1px;height:655px;background:#d4d4d4;"></div>
<div class="r" style="left:55px;top:459px;width:1065px;height:1px;background:#ababab;"></div>
<div class="r" style="left:1124px;top:459px;width:778px;height:1px;background:#d4d4d4;"></div>
<div class="r" style="left:55px;top:493px;width:1065px;height:1px;background:#ababab;"></div>
<div class="r" style="left:1124px;top:493px;width:778px;height:1px;background:#d4d4d4;"></div>
<div class="r" style="left:55px;top:527px;width:1065px;height:1px;background:#ababab;"></div>
<div class="r" style="left:1124px;top:527px;width:778px;height:1px;background:#d4d4d4;"></div>
<div class="r" style="left:55px;top:561px;width:1065px;height:1px;background:#ababab;"></div>
<div class="r" style="left:1124px;top:561px;width:778px;height:1px;background:#d4d4d4;"></div>
<div class="r" style="left:55px;top:595px;width:1065px;height:1px;background:#ababab;"></div>
<div class="r" style="left:1124px;top:595px;width:778px;height:1px;background:#d4d4d4;"></div>
<div class="r" style="left:55px;top:629px;width:1065px;height:1px;background:#ababab;"></div>
<div class="r" style="left:1124px;top:629px;width:778px;height:1px;background:#d4d4d4;"></div>
<div class="r" style="left:55px;top:663px;width:1065px;height:1px;background:#ababab;"></div>
<div class="r" style="left:1124px;top:663px;width:778px;height:1px;background:#d4d4d4;"></div>
<div class="r" style="left:55px;top:697px;width:1065px;height:1px;background:#ababab;"></div>
<div class="r" style="left:1124px;top:697px;width:778px;height:1px;background:#d4d4d4;"></div>
<div class="r" style="left:55px;top:731px;width:1065px;height:1px;background:#ababab;"></div>
<div class="r" style="left:1124px;top:731px;width:778px;height:1px;background:#d4d4d4;"></div>
<div class="r" style="left:55px;top:765px;width:1065px;height:1px;background:#ababab;"></div>
<div class="r" style="left:1124px;top:765px;width:778px;height:1px;background:#d4d4d4;"></div>
<div class="r" style="left:55px;top:799px;width:1065px;height:1px;background:#ababab;"></div>
<div class="r" style="left:1124px;top:799px;width:778px;height:1px;background:#d4d4d4;"></div>
<div class="r" style="left:55px;top:833px;width:1065px;height:1px;background:#ababab;"></div>
<div class="r" style="left:1124px;top:833px;width:778px;height:1px;background:#d4d4d4;"></div>
<div class="r" style="left:55px;top:867px;width:1065px;height:1px;background:#ababab;"></div>
<div class="r" style="left:1124px;top:867px;width:778px;height:1px;background:#d4d4d4;"></div>
<div class="r" style="left:55px;top:901px;width:1065px;height:1px;background:#ababab;"></div>
<div class="r" style="left:1124px;top:901px;width:778px;height:1px;background:#d4d4d4;"></div>
<div class="r" style="left:55px;top:935px;width:1065px;height:1px;background:#ababab;"></div>
<div class="r" style="left:1124px;top:935px;width:778px;height:1px;background:#d4d4d4;"></div>
<div class="r" style="left:55px;top:969px;width:1065px;height:1px;background:#ababab;"></div>
<div class="r" style="left:1124px;top:969px;width:778px;height:1px;background:#d4d4d4;"></div>
<div class="r" style="left:55px;top:1003px;width:1065px;height:1px;background:#ababab;"></div>
<div class="r" style="left:1124px;top:1003px;width:778px;height:1px;background:#d4d4d4;"></div>
<div class="r" style="left:55px;top:1037px;width:1065px;height:1px;background:#ababab;"></div>
<div class="r" style="left:1124px;top:1037px;width:778px;height:1px;background:#d4d4d4;"></div>
<div class="r" style="left:55px;top:1071px;width:1065px;height:1px;background:#ababab;"></div>
<div class="r" style="left:1124px;top:1071px;width:778px;height:1px;background:#d4d4d4;"></div>
<div class="r" style="left:55px;top:1105px;width:1065px;height:1px;background:#ababab;"></div>
<div class="r" style="left:1124px;top:1105px;width:778px;height:1px;background:#d4d4d4;"></div>
<div class="r" style="left:1120px;top:425px;width:1px;height:655px;background:#fff;"></div>
<div class="r" style="left:55px;top:425px;width:1px;height:655px;background:#fff;"></div>
<div class="r" style="left:55px;top:425px;width:1065px;height:1px;background:#fff;"></div>
<div class="r" style="left:55px;top:458px;width:1065px;height:2px;background:#000;"></div>
<div class="r" style="left:52px;top:422px;width:3px;height:658px;background:#1e7145;"></div>
<div class="r" style="left:52px;top:422px;width:1072px;height:3px;background:#1e7145;"></div>
<div class="r" style="left:1121px;top:422px;width:3px;height:658px;background:#1e7145;"></div>
<div class="r" style="left:55px;top:425px;width:1065px;height:655px;overflow:hidden;-webkit-text-stroke:0.35px #000">
<div class="t" style="left:6px;top:5.706999999999994px;font-size:28px;color:#000;">日付</div>
<div class="t" style="left:154px;top:5.706999999999994px;font-size:28px;color:#000;">顧客番号</div>
<div class="t" style="left:286px;top:5.706999999999994px;font-size:28px;color:#000;">担当者</div>
<div class="t" style="left:386px;top:5.706999999999994px;font-size:28px;color:#000;">品番</div>
<div class="t" style="left:458px;top:5.706999999999994px;font-size:28px;color:#000;">品名</div>
<div class="t" style="left:715px;top:5.706999999999994px;font-size:28px;color:#000;">単価</div>
<div class="t" style="left:820px;top:5.706999999999994px;font-size:28px;color:#000;">個数</div>
<div class="t" style="left:945px;top:5.706999999999994px;font-size:28px;color:#000;">金額</div>
<div class="t" style="left:11px;top:40.60000000000002px;font-size:26px;color:#000;transform:scaleX(1.16)">2013/10/1</div>
<div class="t" style="right:788px;top:40.60000000000002px;font-size:26px;color:#000">1002</div>
<div class="t" style="left:286px;top:38.90700000000004px;font-size:28px;color:#000;">木島</div>
<div class="t" style="right:616px;top:40.60000000000002px;font-size:26px;color:#000">453</div>
<div class="t" style="left:459.5px;top:40.60000000000002px;font-size:26px;color:#000;">特製スタンプ角B</div>
<div class="t" style="right:277px;top:40.60000000000002px;font-size:26px;color:#000">3,200</div>
<div class="t" style="right:165px;top:40.60000000000002px;font-size:26px;color:#000">5</div>
<div class="t" style="right:3px;top:40.60000000000002px;font-size:26px;color:#000">16,000</div>
<div class="t" style="left:11px;top:74.60000000000002px;font-size:26px;color:#000;transform:scaleX(1.16)">2013/10/1</div>
<div class="t" style="right:788px;top:74.60000000000002px;font-size:26px;color:#000">1002</div>
<div class="t" style="left:286px;top:72.90700000000004px;font-size:28px;color:#000;">木島</div>
<div class="t" style="right:616px;top:74.60000000000002px;font-size:26px;color:#000">451</div>
<div class="t" style="left:459.5px;top:74.60000000000002px;font-size:26px;color:#000;">特製スタンプ円形</div>
<div class="t" style="right:277px;top:74.60000000000002px;font-size:26px;color:#000">2,100</div>
<div class="t" style="right:165px;top:74.60000000000002px;font-size:26px;color:#000">2</div>
<div class="t" style="right:3px;top:74.60000000000002px;font-size:26px;color:#000">4,200</div>
<div class="t" style="left:11px;top:108.60000000000002px;font-size:26px;color:#000;transform:scaleX(1.16)">2013/10/1</div>
<div class="t" style="right:788px;top:108.60000000000002px;font-size:26px;color:#000">3001</div>
<div class="t" style="left:286px;top:106.90700000000004px;font-size:28px;color:#000;">小田中</div>
<div class="t" style="right:616px;top:108.60000000000002px;font-size:26px;color:#000">102</div>
<div class="t" style="left:459.5px;top:108.60000000000002px;font-size:26px;color:#000;transform:scaleX(0.975);">名刺100枚セットB</div>
<div class="t" style="right:277px;top:108.60000000000002px;font-size:26px;color:#000">6,800</div>
<div class="t" style="right:165px;top:108.60000000000002px;font-size:26px;color:#000">7</div>
<div class="t" style="right:3px;top:108.60000000000002px;font-size:26px;color:#000">47,600</div>
<div class="t" style="left:11px;top:142.60000000000002px;font-size:26px;color:#000;transform:scaleX(1.16)">2013/10/1</div>
<div class="t" style="right:788px;top:142.60000000000002px;font-size:26px;color:#000">1003</div>
<div class="t" style="left:286px;top:140.90700000000004px;font-size:28px;color:#000;">船井</div>
<div class="t" style="right:616px;top:142.60000000000002px;font-size:26px;color:#000">451</div>
<div class="t" style="left:459.5px;top:142.60000000000002px;font-size:26px;color:#000;">特製スタンプ円形</div>
<div class="t" style="right:277px;top:142.60000000000002px;font-size:26px;color:#000">2,100</div>
<div class="t" style="right:165px;top:142.60000000000002px;font-size:26px;color:#000">3</div>
<div class="t" style="right:3px;top:142.60000000000002px;font-size:26px;color:#000">6,300</div>
<div class="t" style="left:11px;top:176.60000000000002px;font-size:26px;color:#000;transform:scaleX(1.16)">2013/10/1</div>
<div class="t" style="right:788px;top:176.60000000000002px;font-size:26px;color:#000">3001</div>
<div class="t" style="left:286px;top:174.90700000000004px;font-size:28px;color:#000;">津川</div>
<div class="t" style="right:616px;top:176.60000000000002px;font-size:26px;color:#000">451</div>
<div class="t" style="left:459.5px;top:176.60000000000002px;font-size:26px;color:#000;">特製スタンプ円形</div>
<div class="t" style="right:277px;top:176.60000000000002px;font-size:26px;color:#000">2,100</div>
<div class="t" style="right:165px;top:176.60000000000002px;font-size:26px;color:#000">3</div>
<div class="t" style="right:3px;top:176.60000000000002px;font-size:26px;color:#000">6,300</div>
<div class="t" style="left:11px;top:210.60000000000002px;font-size:26px;color:#000;transform:scaleX(1.16)">2013/10/1</div>
<div class="t" style="right:788px;top:210.60000000000002px;font-size:26px;color:#000">3001</div>
<div class="t" style="left:286px;top:208.90700000000004px;font-size:28px;color:#000;">津川</div>
<div class="t" style="right:616px;top:210.60000000000002px;font-size:26px;color:#000">323</div>
<div class="t" style="left:459.5px;top:210.60000000000002px;font-size:26px;color:#000;">カラー印刷A3</div>
<div class="t" style="right:277px;top:210.60000000000002px;font-size:26px;color:#000">600</div>
<div class="t" style="right:165px;top:210.60000000000002px;font-size:26px;color:#000">9</div>
<div class="t" style="right:3px;top:210.60000000000002px;font-size:26px;color:#000">5,400</div>
<div class="t" style="left:11px;top:244.60000000000002px;font-size:26px;color:#000;transform:scaleX(1.16)">2013/10/1</div>
<div class="t" style="right:788px;top:244.60000000000002px;font-size:26px;color:#000">1001</div>
<div class="t" style="left:286px;top:242.90700000000004px;font-size:28px;color:#000;">船井</div>
<div class="t" style="right:616px;top:244.60000000000002px;font-size:26px;color:#000">453</div>
<div class="t" style="left:459.5px;top:244.60000000000002px;font-size:26px;color:#000;">特製スタンプ角B</div>
<div class="t" style="right:277px;top:244.60000000000002px;font-size:26px;color:#000">3,200</div>
<div class="t" style="right:165px;top:244.60000000000002px;font-size:26px;color:#000">9</div>
<div class="t" style="right:3px;top:244.60000000000002px;font-size:26px;color:#000">28,800</div>
<div class="t" style="left:11px;top:278.6px;font-size:26px;color:#000;transform:scaleX(1.16)">2013/10/1</div>
<div class="t" style="right:788px;top:278.6px;font-size:26px;color:#000">3001</div>
<div class="t" style="left:286px;top:276.90700000000004px;font-size:28px;color:#000;">船井</div>
<div class="t" style="right:616px;top:278.6px;font-size:26px;color:#000">103</div>
<div class="t" style="left:459.5px;top:278.6px;font-size:26px;color:#000;transform:scaleX(0.975);">名刺100枚セットC</div>
<div class="t" style="right:277px;top:278.6px;font-size:26px;color:#000">12,500</div>
<div class="t" style="right:165px;top:278.6px;font-size:26px;color:#000">1</div>
<div class="t" style="right:3px;top:278.6px;font-size:26px;color:#000">12,500</div>
<div class="t" style="left:11px;top:312.6px;font-size:26px;color:#000;transform:scaleX(1.16)">2013/10/1</div>
<div class="t" style="right:788px;top:312.6px;font-size:26px;color:#000">1002</div>
<div class="t" style="left:286px;top:310.90700000000004px;font-size:28px;color:#000;">小田中</div>
<div class="t" style="right:616px;top:312.6px;font-size:26px;color:#000">323</div>
<div class="t" style="left:459.5px;top:312.6px;font-size:26px;color:#000;">カラー印刷A3</div>
<div class="t" style="right:277px;top:312.6px;font-size:26px;color:#000">600</div>
<div class="t" style="right:165px;top:312.6px;font-size:26px;color:#000">7</div>
<div class="t" style="right:3px;top:312.6px;font-size:26px;color:#000">4,200</div>
<div class="t" style="left:11px;top:346.6px;font-size:26px;color:#000;transform:scaleX(1.16)">2013/10/2</div>
<div class="t" style="right:788px;top:346.6px;font-size:26px;color:#000">3001</div>
<div class="t" style="left:286px;top:344.90700000000004px;font-size:28px;color:#000;">木島</div>
<div class="t" style="right:616px;top:346.6px;font-size:26px;color:#000">104</div>
<div class="t" style="left:459.5px;top:346.6px;font-size:26px;color:#000;transform:scaleX(0.975);">名刺100枚セットD</div>
<div class="t" style="right:277px;top:346.6px;font-size:26px;color:#000">14,500</div>
<div class="t" style="right:165px;top:346.6px;font-size:26px;color:#000">1</div>
<div class="t" style="right:3px;top:346.6px;font-size:26px;color:#000">14,500</div>
<div class="t" style="left:11px;top:380.6px;font-size:26px;color:#000;transform:scaleX(1.16)">2013/10/2</div>
<div class="t" style="right:788px;top:380.6px;font-size:26px;color:#000">1001</div>
<div class="t" style="left:286px;top:378.90700000000004px;font-size:28px;color:#000;">小田中</div>
<div class="t" style="right:616px;top:380.6px;font-size:26px;color:#000">453</div>
<div class="t" style="left:459.5px;top:380.6px;font-size:26px;color:#000;">特製スタンプ角B</div>
<div class="t" style="right:277px;top:380.6px;font-size:26px;color:#000">3,200</div>
<div class="t" style="right:165px;top:380.6px;font-size:26px;color:#000">9</div>
<div class="t" style="right:3px;top:380.6px;font-size:26px;color:#000">28,800</div>
<div class="t" style="left:11px;top:414.6px;font-size:26px;color:#000;transform:scaleX(1.16)">2013/10/2</div>
<div class="t" style="right:788px;top:414.6px;font-size:26px;color:#000">1002</div>
<div class="t" style="left:286px;top:412.90700000000004px;font-size:28px;color:#000;">木島</div>
<div class="t" style="right:616px;top:414.6px;font-size:26px;color:#000">105</div>
<div class="t" style="left:459.5px;top:414.6px;font-size:26px;color:#000;transform:scaleX(0.94);">チラシ100枚セットA</div>
<div class="t" style="right:277px;top:414.6px;font-size:26px;color:#000">2,300</div>
<div class="t" style="right:165px;top:414.6px;font-size:26px;color:#000">5</div>
<div class="t" style="right:3px;top:414.6px;font-size:26px;color:#000">11,500</div>
<div class="t" style="left:11px;top:448.6px;font-size:26px;color:#000;transform:scaleX(1.16)">2013/10/2</div>
<div class="t" style="right:788px;top:448.6px;font-size:26px;color:#000">1003</div>
<div class="t" style="left:286px;top:446.90700000000004px;font-size:28px;color:#000;">小田中</div>
<div class="t" style="right:616px;top:448.6px;font-size:26px;color:#000">321</div>
<div class="t" style="left:459.5px;top:448.6px;font-size:26px;color:#000;">カラー印刷B5</div>
<div class="t" style="right:277px;top:448.6px;font-size:26px;color:#000">240</div>
<div class="t" style="right:165px;top:448.6px;font-size:26px;color:#000">2</div>
<div class="t" style="right:3px;top:448.6px;font-size:26px;color:#000">480</div>
<div class="t" style="left:11px;top:482.6px;font-size:26px;color:#000;transform:scaleX(1.16)">2013/10/2</div>
<div class="t" style="right:788px;top:482.6px;font-size:26px;color:#000">1001</div>
<div class="t" style="left:286px;top:480.90700000000004px;font-size:28px;color:#000;">木島</div>
<div class="t" style="right:616px;top:482.6px;font-size:26px;color:#000">452</div>
<div class="t" style="left:459.5px;top:482.6px;font-size:26px;color:#000;">特製スタンプ角A</div>
<div class="t" style="right:277px;top:482.6px;font-size:26px;color:#000">1,600</div>
<div class="t" style="right:165px;top:482.6px;font-size:26px;color:#000">3</div>
<div class="t" style="right:3px;top:482.6px;font-size:26px;color:#000">4,800</div>
<div class="t" style="left:11px;top:516.6px;font-size:26px;color:#000;transform:scaleX(1.16)">2013/10/2</div>
<div class="t" style="right:788px;top:516.6px;font-size:26px;color:#000">1002</div>
<div class="t" style="left:286px;top:514.907px;font-size:28px;color:#000;">木島</div>
<div class="t" style="right:616px;top:516.6px;font-size:26px;color:#000">451</div>
<div class="t" style="left:459.5px;top:516.6px;font-size:26px;color:#000;">特製スタンプ円形</div>
<div class="t" style="right:277px;top:516.6px;font-size:26px;color:#000">2,100</div>
<div class="t" style="right:165px;top:516.6px;font-size:26px;color:#000">10</div>
<div class="t" style="right:3px;top:516.6px;font-size:26px;color:#000">21,000</div>
<div class="t" style="left:11px;top:550.6px;font-size:26px;color:#000;transform:scaleX(1.16)">2013/10/2</div>
<div class="t" style="right:788px;top:550.6px;font-size:26px;color:#000">3001</div>
<div class="t" style="left:286px;top:548.907px;font-size:28px;color:#000;">木島</div>
<div class="t" style="right:616px;top:550.6px;font-size:26px;color:#000">321</div>
<div class="t" style="left:459.5px;top:550.6px;font-size:26px;color:#000;">カラー印刷B5</div>
<div class="t" style="right:277px;top:550.6px;font-size:26px;color:#000">240</div>
<div class="t" style="right:165px;top:550.6px;font-size:26px;color:#000">9</div>
<div class="t" style="right:3px;top:550.6px;font-size:26px;color:#000">2,160</div>
<div class="t" style="left:11px;top:584.6px;font-size:26px;color:#000;transform:scaleX(1.16)">2013/10/2</div>
<div class="t" style="right:788px;top:584.6px;font-size:26px;color:#000">3001</div>
<div class="t" style="left:286px;top:582.907px;font-size:28px;color:#000;">船井</div>
<div class="t" style="right:616px;top:584.6px;font-size:26px;color:#000">321</div>
<div class="t" style="left:459.5px;top:584.6px;font-size:26px;color:#000;">カラー印刷B5</div>
<div class="t" style="right:277px;top:584.6px;font-size:26px;color:#000">240</div>
<div class="t" style="right:165px;top:584.6px;font-size:26px;color:#000">5</div>
<div class="t" style="right:3px;top:584.6px;font-size:26px;color:#000">1,200</div>
<div class="t" style="left:11px;top:618.5999999999999px;font-size:26px;color:#000;transform:scaleX(1.16)">2013/10/2</div>
<div class="t" style="right:788px;top:618.5999999999999px;font-size:26px;color:#000">1003</div>
<div class="t" style="left:286px;top:616.9069999999999px;font-size:28px;color:#000;">津川</div>
<div class="t" style="right:616px;top:618.5999999999999px;font-size:26px;color:#000">453</div>
<div class="t" style="left:459.5px;top:618.5999999999999px;font-size:26px;color:#000;">特製スタンプ角B</div>
<div class="t" style="right:277px;top:618.5999999999999px;font-size:26px;color:#000">3,200</div>
<div class="t" style="right:165px;top:618.5999999999999px;font-size:26px;color:#000">4</div>
<div class="t" style="right:3px;top:618.5999999999999px;font-size:26px;color:#000">12,800</div>
<div class="t" style="left:11px;top:652.5999999999999px;font-size:26px;color:#000;transform:scaleX(1.16)">2013/10/2</div>
<div class="t" style="right:788px;top:652.5999999999999px;font-size:26px;color:#000">3001</div>
<div class="t" style="left:286px;top:650.9069999999999px;font-size:28px;color:#000;">木島</div>
<div class="t" style="right:616px;top:652.5999999999999px;font-size:26px;color:#000">321</div>
<div class="t" style="left:459.5px;top:652.5999999999999px;font-size:26px;color:#000;">カラー印刷B5</div>
<div class="t" style="right:277px;top:652.5999999999999px;font-size:26px;color:#000">240</div>
<div class="t" style="right:165px;top:652.5999999999999px;font-size:26px;color:#000">7</div>
<div class="t" style="right:3px;top:652.5999999999999px;font-size:26px;color:#000">1,680</div>
</div>
<div class="r" style="left:1902px;top:391px;width:39px;height:690px;background:#e6e6e6;"></div>
<div class="r" style="left:1905px;top:392px;width:33px;height:689px;background:#dcdcdc;"></div>
<div class="r" style="left:1905px;top:392px;width:33px;height:33px;background:#fff;border:1px solid #c6c6c6;"></div>
<svg style="left:1913px;top:404px" width="18" height="9" viewBox="0 0 18 9"><path d="M0 9L9 0l9 9z" fill="#808080"/></svg>
<div class="r" style="left:1905px;top:425px;width:33px;height:34px;background:#fff;border:1px solid #c6c6c6;"></div>
<div class="r" style="left:1905px;top:1049px;width:33px;height:32px;background:#fff;border:1px solid #c6c6c6;"></div>
<svg style="left:1913px;top:1062px" width="18" height="9" viewBox="0 0 18 9"><path d="M0 0h18L9 9z" fill="#808080"/></svg>
<div class="r" style="left:1px;top:1080px;width:1940px;height:41px;background:#e6e6e6;"></div>
<div class="r" style="left:1px;top:1080px;width:1904px;height:1px;background:#a6a6a6;"></div>
<svg style="left:34px;top:1093px" width="10" height="15" viewBox="0 0 10 15"><path d="M9 0v15L0 7.5z" fill="#c0c0c0"/></svg>
<svg style="left:74px;top:1093px" width="10" height="15" viewBox="0 0 10 15"><path d="M1 0v15l9-7.5z" fill="#c0c0c0"/></svg>
<div class="r" style="left:140px;top:1080px;width:131px;height:37px;background:#fff;border-left:1px solid #c6c6c6;border-right:1px solid #c6c6c6;"></div>
<div class="r" style="left:140px;top:1114px;width:131px;height:3px;background:#217346;"></div>
<div id="t60" class="t" style="left:151.5px;top:1085.2px;font-size:25px;color:#217346;transform:scaleX(1.0900);">集計処理</div>
<svg style="left:317px;top:1086px" width="34" height="33" viewBox="0 0 34 33"><circle cx="16.5" cy="16" r="15" fill="none" stroke="#8a8a8a" stroke-width="2"/><path d="M9 16h15M16.5 8.5v15" stroke="#666" stroke-width="3"/></svg>
<div class="r" style="left:1160px;top:1091px;width:4px;height:4px;background:#acacac;"></div>
<div class="r" style="left:1160px;top:1099px;width:4px;height:4px;background:#acacac;"></div>
<div class="r" style="left:1160px;top:1107px;width:4px;height:4px;background:#acacac;"></div>
<div class="r" style="left:1184px;top:1084px;width:720px;height:33px;background:#dcdcdc;"></div>
<div class="r" style="left:1184px;top:1084px;width:34px;height:33px;background:#fff;border:1px solid #c6c6c6;"></div>
<svg style="left:1195px;top:1092px" width="9" height="17" viewBox="0 0 9 17"><path d="M9 0v17L0 8.5z" fill="#7a7a7a"/></svg>
<div class="r" style="left:1217px;top:1084px;width:607px;height:33px;background:#fff;border:1px solid #c6c6c6;"></div>
<div class="r" style="left:1871px;top:1084px;width:33px;height:33px;background:#fff;border:1px solid #c6c6c6;"></div>
<svg style="left:1883px;top:1092px" width="9" height="17" viewBox="0 0 9 17"><path d="M0 0v17l9-8.5z" fill="#7a7a7a"/></svg>
<div class="r" style="left:1px;top:1121px;width:1940px;height:45px;background:#f0f0f0;"></div>
<div class="r" style="left:1px;top:1121px;width:1940px;height:1px;background:#d4d4d4;"></div>
<div id="t61" class="t" style="left:6.6px;top:1130.9px;font-size:23px;color:#444;transform:scaleX(1.0626);">準備完了</div>
<div class="r" style="left:1420px;top:1122px;width:52px;height:44px;background:#c8c8c8;"></div>
<svg style="left:1433px;top:1131px" width="25" height="25" viewBox="0 0 25 25"><rect x="0.5" y="0.5" width="24" height="23" fill="none" stroke="#555"/><path d="M8.5 0v24M16.5 0v24M0 8.5h25M0 16.5h25" stroke="#555"/></svg>
<svg style="left:1485px;top:1131px" width="27" height="25" viewBox="0 0 27 25"><rect x="0.5" y="0.5" width="25" height="23" fill="none" stroke="#555"/><rect x="6.5" y="4.5" width="13" height="16" fill="none" stroke="#555"/><path d="M9 9h8M9 12h8M9 15h8" stroke="#555"/></svg>
<svg style="left:1537px;top:1131px" width="27" height="25" viewBox="0 0 27 25"><rect x="0.5" y="0.5" width="25" height="23" fill="none" stroke="#555"/><path d="M0.5 12.5h12v-12M8.5 0.5v12" fill="none" stroke="#555"/></svg>
<div class="r" style="left:1585px;top:1141px;width:13px;height:3px;background:#555;"></div>
<div class="r" style="left:1606px;top:1142px;width:197px;height:1px;background:#777;"></div>
<div class="r" style="left:1701px;top:1132px;width:8px;height:22px;background:#555;"></div>
<svg style="left:1811px;top:1134px" width="17" height="18" viewBox="0 0 17 18"><path d="M0 9h17M8.5 0v18" stroke="#555" stroke-width="3"/></svg>
<div id="t62" class="t" style="left:1840.5px;top:1130.6px;font-size:25px;color:#333;transform:scaleX(1.1102);">100%</div>
<div class="r" style="left:981px;top:217px;width:580px;height:741px;background:#f0f0f0;border:2px solid #3d8bbd;box-shadow:0 2px 18px 4px rgba(0,0,0,0.28);"></div>
<div class="r" style="left:983px;top:219px;width:576px;height:56px;background:#fff;"></div>
<div id="t63" class="t" style="left:995.6px;top:236.9px;font-size:23px;color:#000;transform:scaleX(1.0066);">集計の設定</div>
<div id="t64" class="t" style="left:1413.4px;top:233.3px;font-size:27px;color:#000;">?</div>
<svg style="left:1502px;top:236px" width="20" height="20" viewBox="0 0 20 20"><path d="M1 1l18 18M19 1L1 19" stroke="#000" stroke-width="2"/></svg>
<div id="t65" class="t" style="left:995.6px;top:294.4px;font-size:23px;color:#000;transform:scaleX(0.9440);">グループの基準(<span style="text-decoration:underline;text-underline-offset:2px">A</span>):</div>
<div class="r" style="left:996px;top:328px;width:550px;height:50px;background:#fff;border:1px solid #a9a9a9;"></div>
<div class="r" style="left:1510px;top:330px;width:35px;height:46px;background:#dfdfdf;border:1px solid #b9b9b9;"></div>
<svg style="left:1520px;top:349px" width="14" height="8" viewBox="0 0 14 8"><path d="M1 1l6 6 6-6" fill="none" stroke="#333" stroke-width="1.4"/></svg>
<div id="t66" class="t" style="left:1004.6px;top:342.9px;font-size:23px;color:#000;transform:scaleX(1.0165);">日付</div>
<div id="t67" class="t" style="left:995.6px;top:392.9px;font-size:23px;color:#000;transform:scaleX(1.0661);">集計の方法(<span style="text-decoration:underline;text-underline-offset:2px">U</span>):</div>
<div class="r" style="left:996px;top:424px;width:550px;height:50px;background:#fff;border:1px solid #a9a9a9;"></div>
<div class="r" style="left:1510px;top:426px;width:35px;height:46px;background:#dfdfdf;border:1px solid #b9b9b9;"></div>
<svg style="left:1520px;top:445px" width="14" height="8" viewBox="0 0 14 8"><path d="M1 1l6 6 6-6" fill="none" stroke="#333" stroke-width="1.4"/></svg>
<div id="t68" class="t" style="left:1004.6px;top:438.9px;font-size:23px;color:#000;transform:scaleX(1.0165);">合計</div>
<div id="t69" class="t" style="left:995.6px;top:487.9px;font-size:23px;color:#000;transform:scaleX(0.8862);">集計するフィールド(<span style="text-decoration:underline;text-underline-offset:2px">D</span>):</div>
<div class="r" style="left:996px;top:520px;width:550px;height:184px;background:#f0f0f0;border:1px solid #a9a9a9;"></div>
<div class="r" style="left:999px;top:524px;width:510px;height:176px;background:#fff;"></div>
<div class="r" style="left:1509px;top:524px;width:33px;height:176px;background:#f0f0f0;"></div>
<div class="r" style="left:1509px;top:598px;width:32px;height:68px;background:#cdcdcd;"></div>
<svg style="left:1519px;top:538px" width="13" height="9" viewBox="0 0 13 9"><path d="M1 8l5.5-6 5.5 6" fill="none" stroke="#555" stroke-width="1.8"/></svg>
<svg style="left:1519px;top:679px" width="13" height="9" viewBox="0 0 13 9"><path d="M1 1l5.5 6 5.5-6" fill="none" stroke="#555" stroke-width="1.8"/></svg>
<div class="r" style="left:1001px;top:527px;width:25px;height:25px;background:#fff;border:2px solid #333;"></div>
<div id="t70" class="t" style="left:1031.6px;top:529.4px;font-size:23px;color:#000;transform:scaleX(1.0600);">品番</div>
<div class="r" style="left:1001px;top:557px;width:25px;height:25px;background:#fff;border:2px solid #333;"></div>
<div id="t71" class="t" style="left:1031.6px;top:559.4px;font-size:23px;color:#000;transform:scaleX(1.0600);">品名</div>
<div class="r" style="left:1001px;top:587px;width:25px;height:25px;background:#fff;border:2px solid #333;"></div>
<div id="t72" class="t" style="left:1031.6px;top:589.4px;font-size:23px;color:#000;transform:scaleX(1.0600);">単価</div>
<div class="r" style="left:1001px;top:617px;width:25px;height:25px;background:#fff;border:2px solid #333;"></div>
<div id="t73" class="t" style="left:1031.6px;top:619.4px;font-size:23px;color:#000;transform:scaleX(1.0600);">個数</div>
<div class="r" style="left:1028px;top:644px;width:480px;height:29px;background:#0078d7;"></div>
<div class="r" style="left:1000px;top:643px;width:509px;height:31px;border:1px dotted #333;"></div>
<div class="r" style="left:1001px;top:647px;width:25px;height:25px;background:#fff;border:2px solid #333;"></div>
<svg style="left:1005px;top:652px" width="17" height="14" viewBox="0 0 17 14"><path d="M1 7l5 5L16 1.5" fill="none" stroke="#333" stroke-width="1.6"/></svg>
<div id="t74" class="t" style="left:1031.6px;top:649.4px;font-size:23px;color:#fff;transform:scaleX(1.0600);">金額</div>
<div class="r" style="left:996px;top:737px;width:26px;height:26px;background:#fff;border:2px solid #333;"></div>
<svg style="left:1000px;top:743px" width="18" height="14" viewBox="0 0 18 14"><path d="M1 7l5 5L17 1.5" fill="none" stroke="#333" stroke-width="1.6"/></svg>
<div id="t75" class="t" style="left:1028.6px;top:740.4px;font-size:23px;color:#000;transform:scaleX(0.9265);">現在の小計をすべて置き換える(<span style="text-decoration:underline;text-underline-offset:2px">C</span>)</div>
<div class="r" style="left:996px;top:783px;width:26px;height:26px;background:#fff;border:2px solid #333;"></div>
<div id="t76" class="t" style="left:1028.6px;top:786.4px;font-size:23px;color:#000;transform:scaleX(0.8635);">グループごとに改ページを挿入する(<span style="text-decoration:underline;text-underline-offset:2px">P</span>)</div>
<div class="r" style="left:996px;top:829px;width:26px;height:26px;background:#fff;border:2px solid #333;"></div>
<svg style="left:1000px;top:835px" width="18" height="14" viewBox="0 0 18 14"><path d="M1 7l5 5L17 1.5" fill="none" stroke="#333" stroke-width="1.6"/></svg>
<div id="t77" class="t" style="left:1028.6px;top:832.4px;font-size:23px;color:#000;transform:scaleX(0.9296);">集計行をデータの下に挿入する(<span style="text-decoration:underline;text-underline-offset:2px">S</span>)</div>
<div class="r" style="left:996px;top:888px;width:183px;height:52px;background:#e1e1e1;border:1px solid #adadad;"></div>
<div id="t78" class="t" style="left:1014.6px;top:903.9px;font-size:23px;color:#000;transform:scaleX(0.9706);">すべて削除(<span style="text-decoration:underline;text-underline-offset:2px">R</span>)</div>
<div class="r" style="left:1200px;top:888px;width:162px;height:52px;background:#e1e1e1;border:2px solid #0078d7;"></div>
<div id="t79" class="t" style="left:1263.1px;top:903.8px;font-size:23px;color:#000;transform:scaleX(1.0609);">OK</div>
<div class="r" style="left:1383px;top:888px;width:162px;height:52px;background:#e1e1e1;border:1px solid #adadad;"></div>
<div id="t80" class="t" style="left:1416.3px;top:903.9px;font-size:23px;color:#000;transform:scaleX(0.7963);">キャンセル</div>
</body></html>
